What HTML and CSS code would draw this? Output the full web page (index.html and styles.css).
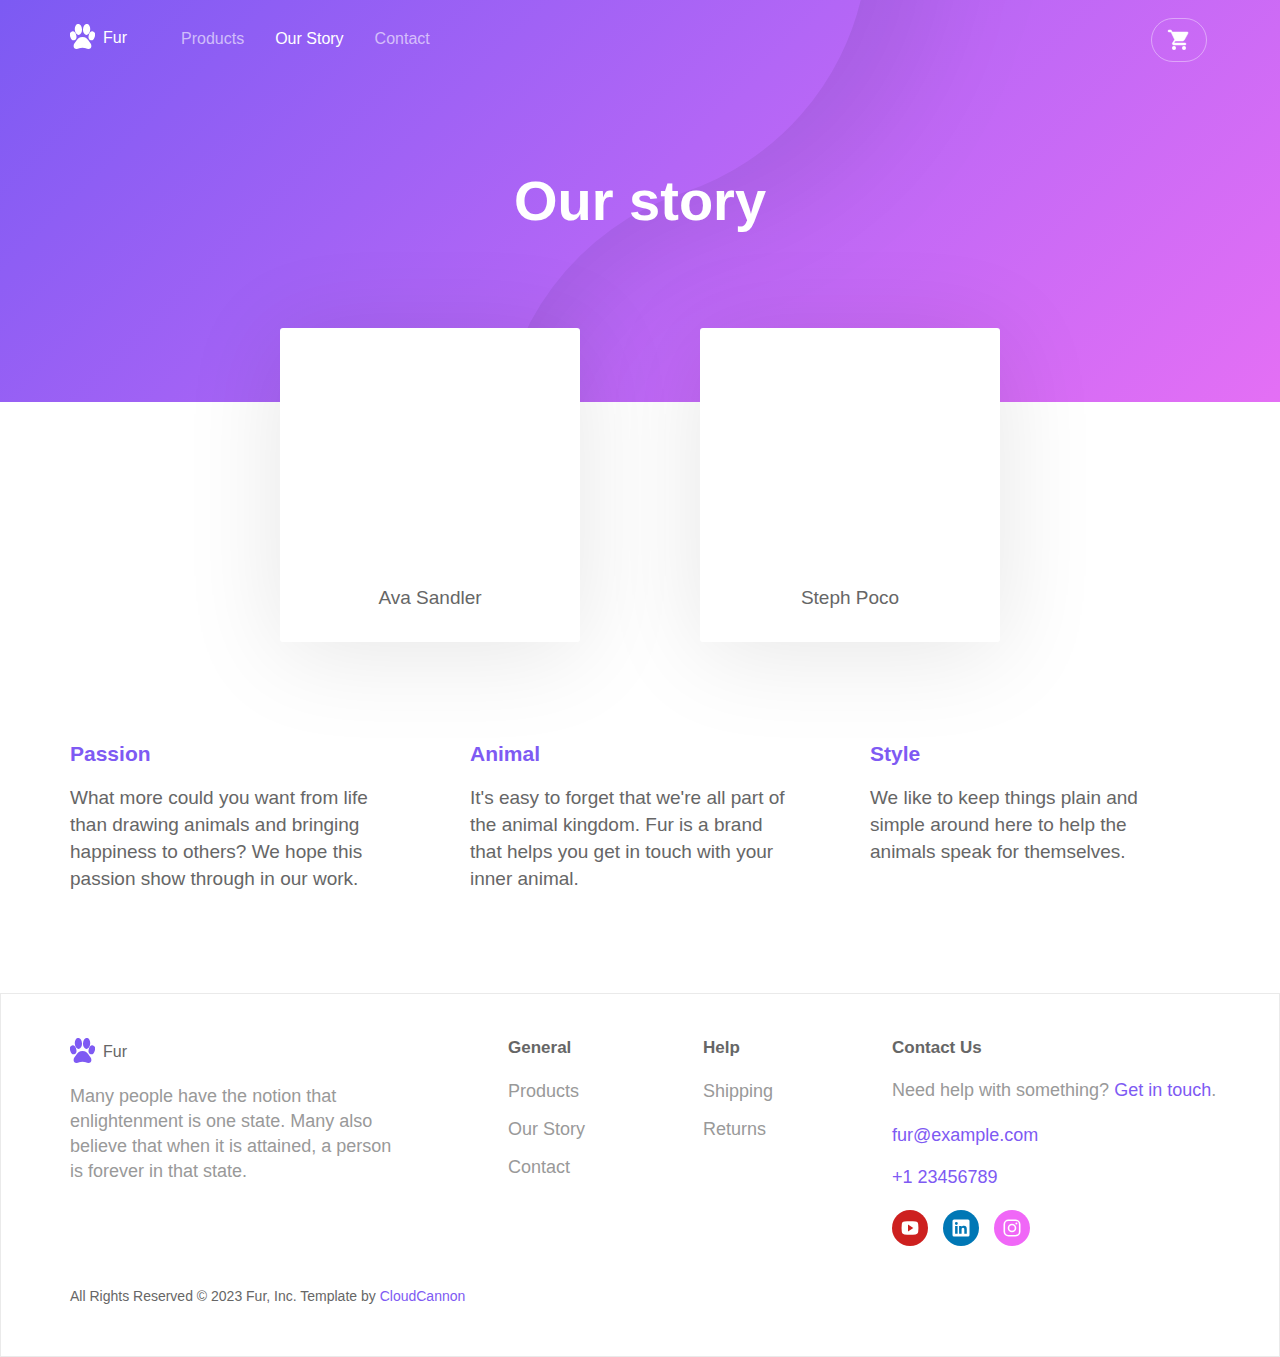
FILE: index.html
```html
<!DOCTYPE html>
<html lang="en">
<head>
<meta charset="utf-8">
<meta name="viewport" content="width=device-width, initial-scale=1">
<title>Our story - Fur</title>
<link rel="stylesheet" href="styles.css">
</head>
<body>
<svg class="sprite" aria-hidden="true">
  <symbol id="paw" viewBox="0 0 25 25">
    <ellipse cx="8.4" cy="5.400" rx="3.600" ry="5.500" transform="rotate(-4 8.4 5.4)"/>
    <ellipse cx="16.6" cy="5.400" rx="3.600" ry="5.500" transform="rotate(4 16.6 5.4)"/>
    <ellipse cx="3.2" cy="11.800" rx="3.100" ry="4.500" transform="rotate(-16 3.2 11.8)"/>
    <ellipse cx="21.8" cy="11.800" rx="3.100" ry="4.500" transform="rotate(16 21.8 11.8)"/>
    <path d="M12.500 12.900c3 0 4.800 1.500 6 3.700.9 1.700 2.900 2.900 2.900 5.500 0 1.800-1.200 2.900-2.900 2.900-2 0-3.300-1.200-6-1.200s-4 1.200-6 1.200c-1.700 0-2.900-1.100-2.900-2.900 0-2.600 2-3.800 2.900-5.500C7.700 14.400 9.500 12.900 12.500 12.900z"/>
  </symbol>
</svg>

<header class="hero">
  <svg class="hero-wave" viewBox="0 0 1280 402" preserveAspectRatio="xMidYMin slice" aria-hidden="true">
    <defs>
      <filter id="soft" x="-20%" y="-50%" width="140%" height="200%"><feGaussianBlur stdDeviation="55"/></filter>
      <clipPath id="right"><path d="M863 -10A270 270 0 0 1 685 192A270 270 0 0 0 499 440H1500V-10Z"/></clipPath>
    </defs>
    <g clip-path="url(#right)">
      <path class="wave-shadow" filter="url(#soft)" d="M940 -60A300 300 0 0 1 740 218A250 250 0 0 0 519 440V600H-100V-300H940Z"/>
    </g>
  </svg>
  <div class="container hero-content">
    <nav class="nav" aria-label="Main">
      <a class="brand" href="#"><svg class="paw"><use href="#paw"/></svg><span>Fur</span></a>
      <ul class="nav-links">
        <li><a href="#">Products</a></li>
        <li><a class="active" href="#" aria-current="page">Our Story</a></li>
        <li><a href="#">Contact</a></li>
      </ul>
      <button class="cart" type="button" aria-label="Cart">
        <svg width="24" height="24" viewBox="0 0 24 24"><circle cx="7" cy="20" r="2"/><circle cx="17" cy="20" r="2"/><path stroke="#fff" stroke-width=".5" d="M1 3c0 .55.45 1 1 1h2l3.600 7.590-1.350 2.440C4.520 15.370 5.480 17 7 17h11c.55 0 1-.45 1-1s-.45-1-1-1H7l1.100-2h7.450c.75 0 1.410-.41 1.750-1.030l3.580-6.490A.996.996 0 0 0 20.010 4H5.210l-.67-1.430A.993.993 0 0 0 3.640 2H2c-.55 0-1 .45-1 1z"/></svg>
      </button>
    </nav>
    <h1>Our story</h1>
  </div>
</header>

<main>
  <section class="team">
    <article class="person"><p>Ava Sandler</p></article>
    <article class="person"><p>Steph Poco</p></article>
  </section>
  <section class="container values">
    <article>
      <h2>Passion</h2>
      <p>What more could you want from life than drawing animals and bringing happiness to others? We hope this passion show through in our work.</p>
    </article>
    <article>
      <h2>Animal</h2>
      <p>It's easy to forget that we're all part of the animal kingdom. Fur is a brand that helps you get in touch with your inner animal.</p>
    </article>
    <article>
      <h2>Style</h2>
      <p>We like to keep things plain and simple around here to help the animals speak for themselves.</p>
    </article>
  </section>
</main>

<footer class="footer">
  <div class="container">
    <div class="footer-grid">
      <div class="about">
        <a class="brand" href="#"><svg class="paw"><use href="#paw"/></svg><span>Fur</span></a>
        <p>Many people have the notion that enlightenment is one state. Many also believe that when it is attained, a person is forever in that state.</p>
      </div>
      <div>
        <h3>General</h3>
        <ul class="footer-links">
          <li><a href="#">Products</a></li>
          <li><a href="#">Our Story</a></li>
          <li><a href="#">Contact</a></li>
        </ul>
      </div>
      <div>
        <h3>Help</h3>
        <ul class="footer-links">
          <li><a href="#">Shipping</a></li>
          <li><a href="#">Returns</a></li>
        </ul>
      </div>
      <div class="contact">
        <h3>Contact Us</h3>
        <p class="help">Need help with something? <a href="#">Get in touch</a>.</p>
        <p><a href="#">fur@example.com</a></p>
        <p><a href="#">+1 23456789</a></p>
        <div class="social">
          <a class="youtube" href="#" aria-label="YouTube">
            <svg width="18" height="18" viewBox="0 0 18 18"><path fill="#fff" fill-rule="evenodd" d="M3.500 2.600C7 2.100 11 2.100 14.500 2.600 16.300 2.800 17 3.700 17.200 5.200c.3 2.500.3 5.100 0 7.600-.2 1.500-.9 2.400-2.700 2.600-3.500.5-7.500.5-11 0C1.700 15.200 1 14.300.8 12.800.5 10.300.5 7.700.8 5.200 1 3.700 1.700 2.800 3.500 2.600zM7 5.500v7L12.300 9z"/></svg>
          </a>
          <a class="linkedin" href="#" aria-label="LinkedIn">
            <svg width="18" height="18" viewBox="0 0 18 18"><path fill="#fff" fill-rule="evenodd" d="M2 .5h14A1.500 1.500 0 0 1 17.500 2v14a1.500 1.500 0 0 1-1.500 1.500H2A1.500 1.500 0 0 1 .5 16V2A1.500 1.500 0 0 1 2 .5zM3.100 7v7.700h2.500V7zM4.350 3.100a1.450 1.450 0 1 0 0 2.900 1.450 1.450 0 0 0 0-2.900zM7.100 7v7.700h2.500v-4c0-1.100.3-1.900 1.400-1.900s1.300.9 1.300 2v3.900h2.500v-4.500c0-2.200-.6-3.500-2.900-3.500-1.100 0-1.900.5-2.300 1.300V7z"/></svg>
          </a>
          <a class="instagram" href="#" aria-label="Instagram">
            <svg width="18" height="18" viewBox="0 0 18 18" fill="none" stroke="#fff" stroke-width="1.600"><rect x="1.300" y="1.300" width="15.400" height="15.400" rx="4.200"/><circle cx="9" cy="9" r="3.500"/><circle cx="13.400" cy="4.600" r="1" fill="#fff" stroke="none"/></svg>
          </a>
        </div>
      </div>
    </div>
    <p class="legal">All Rights Reserved © 2023 Fur, Inc. Template by <a href="#">CloudCannon</a></p>
  </div>
</footer>
</body>
</html>
```
FILE: styles.css
```css
* {
  box-sizing: border-box;
}

body {
  margin: 0;
  background: #fff;
  color: #666;
  font-family: "Liberation Sans", Arial, sans-serif;
  font-size: 19px;
  line-height: 27px;
}

h1, h2, h3, p, ul {
  margin: 0;
  padding: 0;
}

ul {
  list-style: none;
}

a {
  color: #7e5af3;
  text-decoration: none;
}

.sprite {
  display: none;
}

.container {
  width: 100%;
  max-width: 1180px;
  margin: 0 auto;
  padding: 0 20px;
}

/* Hero */
.hero {
  display: grid;
  overflow: hidden;
  background: linear-gradient(135deg, #7c5af3, #b366f6 50%, #e46ff5);
}

.hero-wave,
.hero-content {
  grid-area: 1 / 1;
}

.hero-wave {
  width: 100%;
  height: 100%;
  min-height: 0;
  contain: size;
}

.wave-shadow {
  fill: #000;
  fill-opacity: 0.08;
}

.hero-content {
  position: relative;
  padding-top: 18px;
  padding-bottom: 169px;
}

.nav {
  display: flex;
  align-items: flex-start;
  font-size: 16px;
  line-height: 26px;
}

.brand {
  display: flex;
  align-items: flex-start;
  gap: 8px;
  font-size: 16px;
  line-height: 27px;
}

.paw {
  width: 25px;
  height: 25px;
  fill: currentColor;
}

.nav .brand {
  margin-top: 6px;
  color: #fff;
}

.nav-links {
  display: flex;
  gap: 31px;
  margin: 8px auto 0 54px;
}

.nav-links a {
  color: rgba(255, 255, 255, 0.6);
}

.nav-links .active {
  color: #fff;
}

.cart {
  display: flex;
  align-items: center;
  justify-content: center;
  width: 56px;
  height: 44px;
  margin-right: 3px;
  padding: 0;
  border: 1px solid rgba(255, 255, 255, 0.4);
  border-radius: 22px;
  background: none;
  fill: #fff;
}

h1 {
  margin-top: 106px;
  color: #fff;
  font-size: 56px;
  line-height: 65px;
  text-align: center;
}

/* Team */
.team {
  position: relative;
  display: flex;
  justify-content: center;
  gap: 120px;
  margin-top: -74px;
}

.person {
  width: 300px;
  padding: 256px 20px 31px;
  border-radius: 3px;
  background: #fff;
  box-shadow: 0 10px 100px rgba(0, 0, 0, 0.1);
  text-align: center;
}

/* Values */
.values {
  position: relative;
  display: grid;
  grid-template-columns: repeat(3, 1fr);
  gap: 60px;
  padding-top: 98px;
  padding-bottom: 101px;
}

.values article {
  padding-right: 20px;
}

h2 {
  margin-bottom: 16px;
  color: #7e5af3;
  font-size: 21px;
  line-height: 28px;
}

/* Footer */
.footer {
  padding: 41px 0 47px;
  border: 1px solid #eaeaea;
  font-size: 18px;
  line-height: 25px;
}

.footer-grid {
  display: grid;
  grid-template-columns: minmax(0, 438fr) minmax(0, 195fr) minmax(0, 189fr) minmax(0, 318fr);
}

.about .brand {
  margin: 3px 0 19px;
}

.about .brand span {
  color: #666;
}

.about p {
  max-width: 330px;
  color: #999;
}

h3 {
  margin-bottom: 18px;
  font-size: 17px;
  line-height: 25px;
}

.footer-links {
  display: grid;
  gap: 13px;
  padding-top: 1px;
}

.footer-links a,
.contact p {
  color: #999;
}

.contact p {
  margin-bottom: 17px;
  white-space: nowrap;
}

.contact .help {
  margin-bottom: 20px;
}

.social {
  display: flex;
  gap: 15px;
  margin-top: 20px;
}

.social a {
  display: flex;
  align-items: center;
  justify-content: center;
  width: 36px;
  height: 36px;
  border-radius: 50%;
}

.youtube {
  background: #cd201f;
}

.linkedin {
  background: #0077b5;
}

.instagram {
  background: #f067f7;
}

.legal {
  margin-top: 38px;
  font-size: 14px;
}
```
